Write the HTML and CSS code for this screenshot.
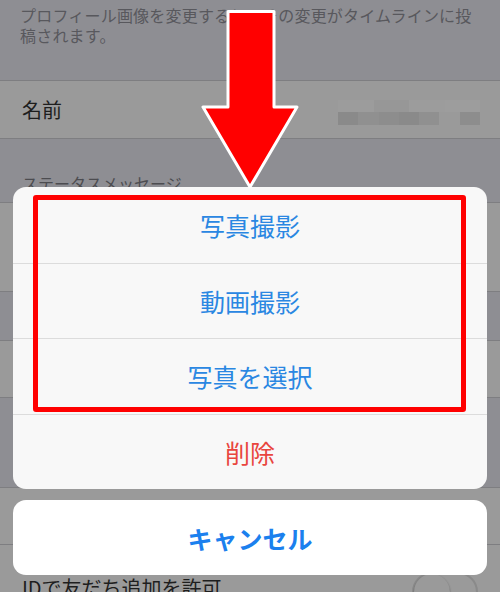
FILE: index.html
```html
<!DOCTYPE html>
<html lang="ja">
<head>
  <meta charset="UTF-8">
  <meta name="viewport" content="width=device-width, initial-scale=1.0">
  <title>プロフィール設定</title>
  <link rel="stylesheet" href="styles.css">
</head>
<body>
  <!-- Profile settings (dimmed behind the sheet) -->
  <div class="settings">
    <p class="note">プロフィール画像を変更すると、その変更がタイムラインに投稿されます。</p>

    <div class="row row-name">
      <span class="label">名前</span>
      <div class="mosaic">
        <div class="mosaic-top">
          <span class="m1"></span><span class="m2"></span><span class="m1"></span><span class="m3"></span>
        </div>
        <div class="mosaic-bottom">
          <span class="d1"></span><span class="d2"></span><span class="d3"></span><span class="d1"></span><span class="d2"></span><span class="gap"></span><span class="d3"></span>
        </div>
      </div>
    </div>

    <div class="section-head">ステータスメッセージ</div>
    <div class="row row-status"></div>

    <div class="section-gap"></div>
    <div class="row row-plain"></div>

    <div class="section-gap tall"></div>
    <div class="row row-plain sep-bottom"></div>
    <div class="row row-toggle">
      <span class="label">IDで友だち追加を許可</span>
      <span class="toggle"><span class="knob"></span></span>
    </div>
  </div>

  <!-- Action sheet -->
  <div class="sheet">
    <div class="sheet-group">
      <button class="action">写真撮影</button>
      <button class="action">動画撮影</button>
      <button class="action">写真を選択</button>
      <button class="action danger">削除</button>
    </div>
    <button class="cancel">キャンセル</button>
  </div>

  <!-- Callout over the first three actions -->
  <div class="highlight"></div>
  <svg class="arrow" width="500" height="200" viewBox="0 0 500 200">
    <polygon points="228,11.5 274,11.5 274,107 297,107 250,187 203,107 228,107"
             fill="#ff0000" stroke="#ffffff" stroke-width="3" stroke-linejoin="round"/>
  </svg>
</body>
</html>
```

FILE: styles.css
```css
/* General Styles */
body {
  margin: 0;
  width: 500px;
  height: 592px;
  overflow: hidden;
  position: relative;
  background-color: #8e8e93;
  font-family: 'Noto Sans CJK JP', 'Noto Sans', sans-serif;
}

/* Settings list */
.settings {
  display: flex;
  flex-direction: column;
}

.note {
  margin: 0;
  height: 80px;
  box-sizing: border-box;
  padding: 5px 20px 0;
  font-size: 16px;
  line-height: 20px;
  letter-spacing: 0.2px;
  color: #58585d;
}

.row {
  background-color: #9a9a9a;
  box-sizing: border-box;
}

.row-name {
  height: 59px;
  border-top: 1px solid #7e7e81;
  border-bottom: 1px solid #7e7e81;
  display: flex;
  align-items: center;
  justify-content: space-between;
  padding: 0 20px 0 22px;
}

.label {
  font-size: 20px;
  color: #1e1e1e;
}

/* Pixelated name value */
.mosaic {
  display: flex;
  flex-direction: column;
  width: 142px;
  margin-top: 6px;
}

.mosaic-top,
.mosaic-bottom {
  display: flex;
  height: 12px;
}

.mosaic-top span {
  flex: 1;
}

.mosaic-bottom {
  height: 13px;
}

.mosaic-bottom span {
  flex: 1;
}

.m1 { background-color: #9c9c9c; }
.m2 { background-color: #979797; }
.m3 { background-color: #9d9d9d; }
.d1 { background-color: #8a8a8a; }
.d2 { background-color: #909090; }
.d3 { background-color: #8d8d8d; }
.gap { background-color: #9a9a9a; }

.section-head {
  height: 64px;
  box-sizing: border-box;
  padding: 32px 0 0 22px;
  font-size: 16px;
  color: #4c4c50;
  border-bottom: 1px solid #7e7e81;
}

.row-status {
  height: 89px;
  border-bottom: 1px solid #7e7e81;
}

.section-gap {
  height: 48px;
}

.section-gap.tall {
  height: 89px;
}

.row-plain {
  height: 58px;
  border-top: 1px solid #7e7e81;
  border-bottom: 1px solid #7e7e81;
}

.row-plain.sep-bottom {
  border-bottom: none;
  box-shadow: inset 0 -1px 0 #7e7e81;
}

.row-toggle {
  height: 70px;
  display: flex;
  align-items: center;
  justify-content: space-between;
  padding: 14px 22px 0 22px;
}

.toggle {
  width: 66px;
  height: 40px;
  border-radius: 20px;
  border: 2px solid #8a8a8a;
  box-sizing: border-box;
  position: relative;
  margin-top: 10px;
}

.knob {
  position: absolute;
  left: 0;
  top: 0;
  width: 36px;
  height: 36px;
  border-radius: 50%;
  background-color: #9a9a9a;
  box-shadow: 0 1px 2px rgba(0, 0, 0, 0.4);
}

/* Action Sheet */
.sheet {
  position: absolute;
  left: 13px;
  right: 13px;
  top: 187px;
  display: flex;
  flex-direction: column;
  gap: 11px;
}

.sheet-group {
  display: flex;
  flex-direction: column;
  background-color: #f8f8f8;
  border-radius: 13px;
  overflow: hidden;
}

.action,
.cancel {
  border: none;
  margin: 0;
  padding: 0;
  font-family: 'Noto Sans CJK JP', 'Noto Sans', sans-serif;
  font-size: 25px;
  color: #2a87e2;
  background: transparent;
  cursor: pointer;
}

.action {
  height: 75.5px;
  border-top: 1px solid #dcdcdc;
}

.action:first-child {
  border-top: none;
}

.action.danger {
  color: #e9463e;
}

.cancel {
  height: 75px;
  background-color: #fff;
  border-radius: 13px;
  font-weight: 700;
  color: #1b80ee;
}

/* Callout */
.highlight {
  position: absolute;
  left: 33px;
  top: 195px;
  width: 433px;
  height: 217px;
  box-sizing: border-box;
  border: 5px solid #ff0000;
  border-radius: 3px;
}

.arrow {
  position: absolute;
  left: 0;
  top: 0;
}
```
